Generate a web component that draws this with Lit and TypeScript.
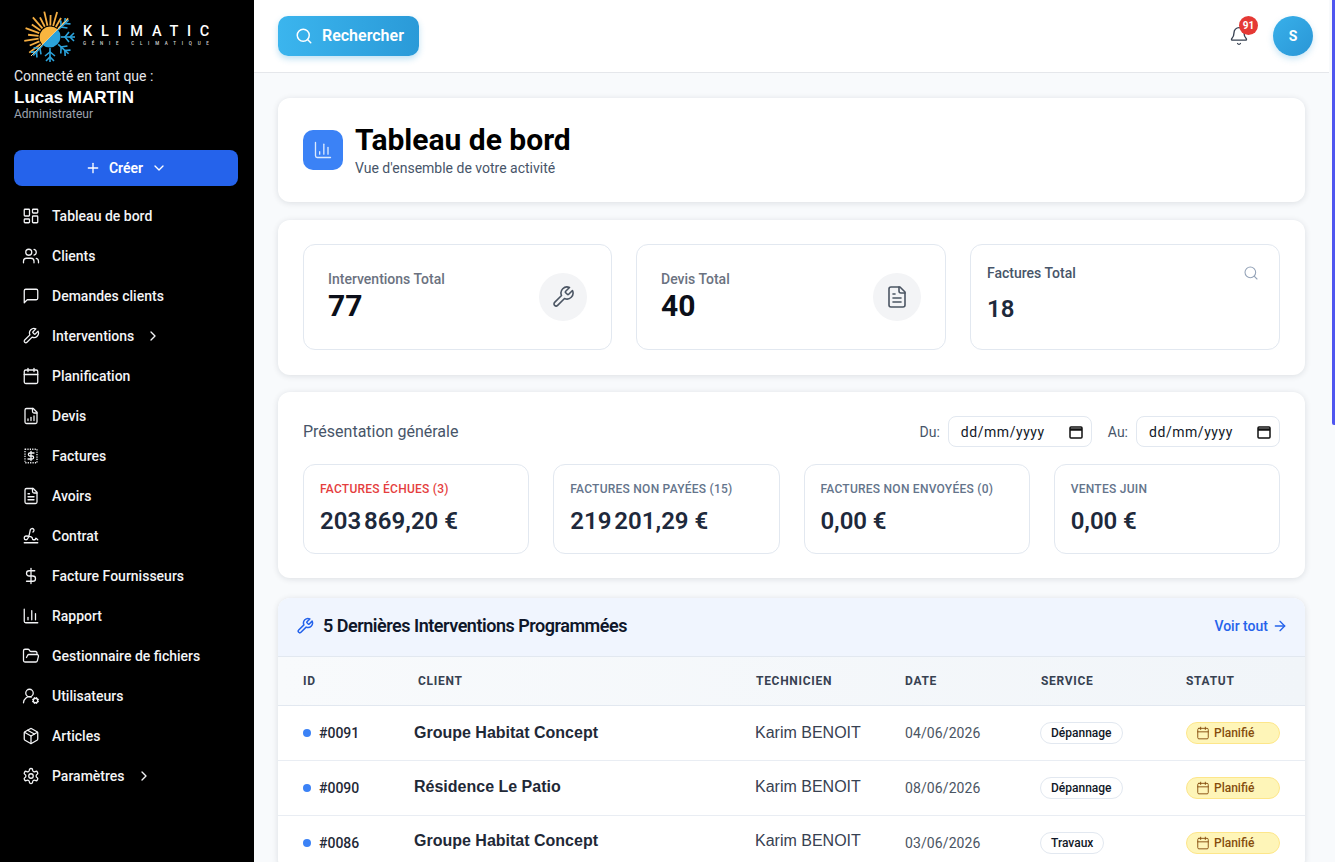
import { LitElement, html, css, svg } from 'lit';
import { customElement } from 'lit/decorators.js';

const paths: Record<string, string[]> = {
  users: ['M16 21v-2a4 4 0 0 0-4-4H6a4 4 0 0 0-4 4v2', 'M9 3a4 4 0 1 0 0 8 4 4 0 0 0 0-8z', 'M22 21v-2a4 4 0 0 0-3-3.87', 'M16 3.13a4 4 0 0 1 0 7.75'],
  message: ['M21 15a2 2 0 0 1-2 2H7l-4 4V5a2 2 0 0 1 2-2h14a2 2 0 0 1 2 2z'],
  wrench: ['M14.7 6.3a1 1 0 0 0 0 1.4l1.6 1.6a1 1 0 0 0 1.4 0l3.77-3.77a6 6 0 0 1-7.94 7.94l-6.91 6.91a2.12 2.12 0 0 1-3-3l6.91-6.91a6 6 0 0 1 7.94-7.94l-3.76 3.76z'],
  calendar: ['M5 4h14a2 2 0 0 1 2 2v14a2 2 0 0 1-2 2H5a2 2 0 0 1-2-2V6a2 2 0 0 1 2-2z', 'M16 2v4', 'M8 2v4', 'M3 10h18'],
  fileChart: ['M15 2H6a2 2 0 0 0-2 2v16a2 2 0 0 0 2 2h12a2 2 0 0 0 2-2V7z', 'M14 2v4a2 2 0 0 0 2 2h4', 'M8 18v-2', 'M12 18v-4', 'M16 18v-6'],
  fileText: ['M15 2H6a2 2 0 0 0-2 2v16a2 2 0 0 0 2 2h12a2 2 0 0 0 2-2V7z', 'M14 2v4a2 2 0 0 0 2 2h4', 'M10 9H8', 'M16 13H8', 'M16 17H8'],
  signature: ['m21 17-2.156-1.868A.5.5 0 0 0 18 15.5v.5a1 1 0 0 1-1 1h-2a1 1 0 0 1-1-1c0-2.545-3.991-3.97-8.5-4a1 1 0 0 0 0 5c4.153 0 4.745-11.295 5.708-13.5a2.5 2.5 0 1 1 3.31 3.284', 'M3 21h18'],
  dollar: ['M12 2v20', 'M17 5H9.5a3.5 3.5 0 0 0 0 7h5a3.5 3.5 0 0 1 0 7H6'],
  chart: ['M3 3v16a2 2 0 0 0 2 2h16', 'M18 17V9', 'M13 17V5', 'M8 17v-3'],
  folder: ['m6 14 1.5-2.9A2 2 0 0 1 9.24 10H20a2 2 0 0 1 1.94 2.5l-1.54 6a2 2 0 0 1-1.95 1.5H4a2 2 0 0 1-2-2V5a2 2 0 0 1 2-2h3.9a2 2 0 0 1 1.69.9l.81 1.2a2 2 0 0 0 1.67.9H18a2 2 0 0 1 2 2v2'],
  userCog: ['M2 21a8 8 0 0 1 10.434-7.62', 'M10 3a5 5 0 1 0 0 10 5 5 0 0 0 0-10z', 'M18 15a3 3 0 1 0 0 6 3 3 0 0 0 0-6z', 'm14.305 19.53.923-.382', 'm15.228 16.852-.923-.383', 'm16.852 15.228-.383-.923', 'm16.852 20.772-.383.924', 'm19.148 15.228.383-.923', 'm19.53 21.696-.382-.924', 'm20.772 16.852.924-.383', 'm20.772 19.148.924.383'],
  box: ['M21 8a2 2 0 0 0-1-1.73l-7-4a2 2 0 0 0-2 0l-7 4A2 2 0 0 0 3 8v8a2 2 0 0 0 1 1.73l7 4a2 2 0 0 0 2 0l7-4A2 2 0 0 0 21 16Z', 'M12 22V12', 'm3.3 7 8.7 5 8.7-5', 'm7.5 4.27 9 5.15'],
  settings: ['M12.22 2h-.44a2 2 0 0 0-2 2v.18a2 2 0 0 1-1 1.73l-.43.25a2 2 0 0 1-2 0l-.15-.08a2 2 0 0 0-2.73.73l-.22.38a2 2 0 0 0 .73 2.73l.15.1a2 2 0 0 1 1 1.72v.51a2 2 0 0 1-1 1.74l-.15.09a2 2 0 0 0-.73 2.73l.22.38a2 2 0 0 0 2.73.73l.15-.08a2 2 0 0 1 2 0l.43.25a2 2 0 0 1 1 1.73V20a2 2 0 0 0 2 2h.44a2 2 0 0 0 2-2v-.18a2 2 0 0 1 1-1.73l.43-.25a2 2 0 0 1 2 0l.15.08a2 2 0 0 0 2.73-.73l.22-.39a2 2 0 0 0-.73-2.73l-.15-.08a2 2 0 0 1-1-1.74v-.5a2 2 0 0 1 1-1.74l.15-.09a2 2 0 0 0 .73-2.73l-.22-.38a2 2 0 0 0-2.73-.73l-.15.08a2 2 0 0 1-2 0l-.43-.25a2 2 0 0 1-1-1.73V4a2 2 0 0 0-2-2z', 'M12 9a3 3 0 1 0 0 6 3 3 0 0 0 0-6z'],
  dashboard: ['M4 3h5a1 1 0 0 1 1 1v7a1 1 0 0 1-1 1H4a1 1 0 0 1-1-1V4a1 1 0 0 1 1-1z', 'M15 3h5a1 1 0 0 1 1 1v3a1 1 0 0 1-1 1h-5a1 1 0 0 1-1-1V4a1 1 0 0 1 1-1z', 'M15 12h5a1 1 0 0 1 1 1v7a1 1 0 0 1-1 1h-5a1 1 0 0 1-1-1v-7a1 1 0 0 1 1-1z', 'M4 16h5a1 1 0 0 1 1 1v3a1 1 0 0 1-1 1H4a1 1 0 0 1-1-1v-3a1 1 0 0 1 1-1z'],
  receipt: ['M16 8h-5.5a2 2 0 0 0 0 4h3a2 2 0 0 1 0 4H8', 'M12 6v12'],
  search: ['M11 3a8 8 0 1 0 0 16 8 8 0 0 0 0-16z', 'm21 21-4.3-4.3'],
  bell: ['M10.268 21a2 2 0 0 0 3.464 0', 'M3.262 15.326A1 1 0 0 0 4 17h16a1 1 0 0 0 .74-1.673C19.41 13.956 18 12.499 18 8A6 6 0 0 0 6 8c0 4.499-1.411 5.956-2.738 7.326'],
  plus: ['M5 12h14', 'M12 5v14'],
  down: ['m6 9 6 6 6-6'],
  right: ['m9 18 6-6-6-6'],
  arrow: ['M5 12h14', 'm12 5 7 7-7 7'],
};

const icon = (name: string, size = 18, width = 2) => html`<svg class="ico" width=${size} height=${size} viewBox="0 0 24 24" fill="none" stroke="currentColor" stroke-width=${width} stroke-linecap="round" stroke-linejoin="round">
  ${paths[name].map((d) => svg`<path d=${d}></path>`)}
  ${name === 'receipt' ? svg`<rect x="4" y="3" width="16" height="18" stroke-dasharray="1.6 1.6" stroke-linecap="butt"></rect>` : ''}
</svg>`;

const navItems = [
  { label: 'Tableau de bord', icon: 'dashboard' },
  { label: 'Clients', icon: 'users' },
  { label: 'Demandes clients', icon: 'message' },
  { label: 'Interventions', icon: 'wrench', more: true },
  { label: 'Planification', icon: 'calendar' },
  { label: 'Devis', icon: 'fileChart' },
  { label: 'Factures', icon: 'receipt' },
  { label: 'Avoirs', icon: 'fileText' },
  { label: 'Contrat', icon: 'signature' },
  { label: 'Facture Fournisseurs', icon: 'dollar' },
  { label: 'Rapport', icon: 'chart' },
  { label: 'Gestionnaire de fichiers', icon: 'folder' },
  { label: 'Utilisateurs', icon: 'userCog' },
  { label: 'Articles', icon: 'box' },
  { label: 'Paramètres', icon: 'settings', more: true },
];

const amounts = [
  { label: 'Factures échues (3)', value: '203\u202f869,20 €', alert: true },
  { label: 'Factures non payées (15)', value: '219\u202f201,29 €' },
  { label: 'Factures non envoyées (0)', value: '0,00 €' },
  { label: 'Ventes juin', value: '0,00 €' },
];

const rows = [
  { id: '#0091', client: 'Groupe Habitat Concept', date: '04/06/2026', service: 'Dépannage' },
  { id: '#0090', client: 'Résidence Le Patio', date: '08/06/2026', service: 'Dépannage' },
  { id: '#0086', client: 'Groupe Habitat Concept', date: '03/06/2026', service: 'Travaux' },
];

// sun rays and snowflake arms of the logo
const rays = Array.from({ length: 13 }, (_, i) => {
  const a = ((-220 + i * (180 / 12.6) + 3) * Math.PI) / 180;
  const long = i % 2 === 0 ? 26 : 22;
  return svg`<line x1=${30 + Math.cos(a) * 11.5} y1=${30 + Math.sin(a) * 11.5} x2=${30 + Math.cos(a) * long} y2=${30 + Math.sin(a) * long} stroke="#f5ae42" stroke-width="1.8"></line>`;
});

const arms = [-42, 0, 42, 90, 132].map((deg) => svg`<g transform="rotate(${deg} 30 30)" stroke="#2ba3dc" stroke-width="1.6" fill="none">
  <path d="M41 30H55"></path>
  <path d="M49 25l-4 5 4 5"></path>
  <path d="M54 26l-4 4 4 4"></path>
</g>`);

@customElement('app-root')
export class AppRoot extends LitElement {
  static styles = css`
    :host {
      display: flex;
      width: 1335px;
      height: 862px;
      overflow: hidden;
      font-family: Roboto, 'Liberation Sans', sans-serif;
      background: #f8fafc;
    }
    .ico {
      display: block;
      flex: none;
    }

    /* sidebar */
    .sidebar {
      width: 254px;
      flex: none;
      background: #000;
      color: #fff;
      box-sizing: border-box;
      padding-top: 10px;
    }
    .logo {
      display: flex;
      align-items: center;
      height: 50px;
      padding-left: 20px;
      gap: 3px;
    }
    .logo-text {
      display: flex;
      flex-direction: column;
    }
    .logo-name {
      font-size: 14.5px;
      font-weight: 500;
      letter-spacing: 8.75px;
      line-height: 16px;
      white-space: nowrap;
    }
    .logo-sub {
      font-size: 4.5px;
      font-weight: 500;
      letter-spacing: 5.75px;
      line-height: 6px;
      margin-top: 1px;
      color: #d8d8d8;
      white-space: nowrap;
    }
    .who {
      padding: 7px 14px 0;
    }
    .who-top {
      font-size: 14px;
      line-height: 18px;
      color: #e5e7eb;
    }
    .who-name {
      font-family: 'Liberation Sans', sans-serif;
      font-size: 17px;
      font-weight: 700;
      line-height: 20px;
      margin-top: 3px;
    }
    .who-role {
      font-size: 12px;
      line-height: 14px;
      margin-top: -1px;
      color: #9ca3af;
    }
    .create {
      height: 36px;
      margin: 29px 16px 10px 14px;
      background: #2563eb;
      border-radius: 8px;
      display: flex;
      align-items: center;
      justify-content: center;
      gap: 8px;
      font-size: 14px;
      font-weight: 600;
    }
    .nav-item {
      display: flex;
      align-items: center;
      height: 40px;
      padding-left: 22px;
      gap: 12px;
      font-size: 14px;
      font-weight: 500;
      color: #f3f4f6;
    }
    .nav-more {
      margin-left: -1px;
    }

    /* main column */
    .main {
      width: 1075px;
      flex: none;
      display: flex;
      flex-direction: column;
    }
    .topbar {
      height: 73px;
      box-sizing: border-box;
      flex: none;
      background: #fff;
      border-bottom: 1px solid #e5e7eb;
      display: flex;
      align-items: center;
      padding: 0 16px 0 24px;
    }
    .search-btn {
      height: 40px;
      width: 141px;
      box-sizing: border-box;
      padding-left: 17px;
      display: flex;
      align-items: center;
      gap: 9px;
      color: #fff;
      font-size: 16px;
      font-weight: 600;
      border-radius: 10px;
      background: linear-gradient(90deg, #3bb5ee, #2a9ad8);
      box-shadow: 0 3px 6px rgba(42, 154, 216, 0.3);
    }
    .search-btn span {
      margin-top: -2px;
    }
    .bell {
      position: relative;
      margin-left: auto;
      margin-right: 24px;
      color: #374151;
    }
    .badge {
      position: absolute;
      top: -10px;
      left: 10px;
      width: 19px;
      height: 19px;
      border-radius: 50%;
      background: #e53935;
      color: #fff;
      font-size: 10px;
      font-weight: 700;
      display: flex;
      align-items: center;
      justify-content: center;
    }
    .avatar {
      width: 40px;
      height: 40px;
      border-radius: 50%;
      background: linear-gradient(135deg, #38b0ea, #2a96d6);
      color: #fff;
      font-size: 14px;
      font-weight: 700;
      display: flex;
      align-items: center;
      justify-content: center;
      box-shadow: 0 3px 6px rgba(42, 154, 216, 0.25);
    }
    .content {
      padding: 25px 24px 0;
      display: flex;
      flex-direction: column;
    }
    .card {
      background: #fff;
      border-radius: 12px;
      box-shadow: 0 1px 6px rgba(15, 23, 42, 0.12);
      box-sizing: border-box;
    }

    /* page title */
    .title-card {
      height: 104px;
      padding: 0 25px;
      display: flex;
      align-items: center;
      gap: 12px;
      margin-bottom: 18px;
    }
    .title-icon {
      width: 40px;
      height: 40px;
      border-radius: 10px;
      background: #3b82f6;
      color: #dbeafe;
      display: flex;
      align-items: center;
      justify-content: center;
    }
    h1 {
      margin: 1px 0 0;
      font-size: 30px;
      font-weight: 700;
      line-height: 34px;
      color: #000;
    }
    .subtitle {
      font-size: 14px;
      line-height: 20px;
      margin-top: 1px;
      color: #475569;
    }

    /* totals */
    .totals {
      height: 155px;
      padding: 24px 25px;
      display: grid;
      grid-template-columns: 309px 310px 310px;
      gap: 24px;
      margin-bottom: 17px;
    }
    .box {
      border: 1px solid #e2e8f0;
      border-radius: 12px;
      box-sizing: border-box;
    }
    .total {
      height: 106px;
      padding: 0 24px;
      display: flex;
      align-items: center;
      justify-content: space-between;
    }
    .total-label {
      font-size: 14px;
      font-weight: 500;
      line-height: 16px;
      color: #6b7280;
    }
    .total-value {
      font-size: 30px;
      font-weight: 700;
      line-height: 36px;
      margin: 1px 0 -1px;
      color: #0b0f19;
    }
    .round {
      width: 48px;
      height: 48px;
      border-radius: 50%;
      background: #f3f4f6;
      color: #4b5563;
      display: flex;
      align-items: center;
      justify-content: center;
    }
    .total-plain {
      height: 106px;
      padding: 20px 16px 0;
    }
    .plain-top {
      display: flex;
      align-items: center;
      justify-content: space-between;
      font-size: 14px;
      font-weight: 500;
      line-height: 16px;
      color: #475569;
    }
    .plain-top .ico {
      color: #94a3b8;
      margin-right: 4px;
    }
    .plain-value {
      font-size: 24px;
      font-weight: 600;
      line-height: 32px;
      margin-top: 12px;
      color: #1e293b;
    }

    /* overview */
    .overview {
      height: 186px;
      padding: 24px 25px;
      margin-bottom: 20px;
    }
    .overview-top {
      display: flex;
      align-items: center;
      height: 31px;
      margin-bottom: 17px;
    }
    .overview-title {
      font-size: 16px;
      color: #475569;
      margin-right: auto;
    }
    .date-label {
      font-size: 14px;
      color: #475569;
      margin: 0 8px 0 16px;
    }
    .date {
      width: 144px;
      height: 31px;
      box-sizing: border-box;
      border: 1px solid #e2e8f0;
      border-radius: 8px;
      display: flex;
      align-items: center;
      justify-content: space-between;
      padding: 0 7px 0 12px;
      font-size: 14px;
      letter-spacing: 0.55px;
      color: #111827;
    }
    .amounts {
      display: grid;
      grid-template-columns: repeat(4, 1fr);
      gap: 24px;
    }
    .amount {
      height: 90px;
      padding: 16px 16px 0;
    }
    .amount-label {
      font-size: 12px;
      font-weight: 500;
      line-height: 16px;
      letter-spacing: 0.25px;
      text-transform: uppercase;
      color: #64748b;
      white-space: nowrap;
    }
    .amount-label.alert {
      color: #e53e3e;
    }
    .amount-value {
      font-size: 24px;
      font-weight: 600;
      line-height: 32px;
      letter-spacing: -0.1px;
      margin-top: 8px;
      color: #1e293b;
    }

    /* table */
    .table-card {
      overflow: hidden;
    }
    .table-head {
      height: 59px;
      box-sizing: border-box;
      border-bottom: 1px solid #e2e8f0;
      background: #f0f5fe;
      display: flex;
      align-items: center;
      padding: 0 17px 2px 18px;
      color: #2563eb;
    }
    .table-title {
      font-size: 18px;
      font-weight: 600;
      line-height: 22px;
      letter-spacing: -0.48px;
      color: #0f172a;
      margin: 0 auto 0 9px;
    }
    .see-all {
      display: flex;
      align-items: center;
      gap: 4px;
      font-size: 14px;
      font-weight: 500;
    }
    .grid {
      display: grid;
      grid-template-columns: 115px 338px 149px 136px 145px 1fr;
      padding-left: 25px;
      align-items: center;
    }
    .grid-head {
      height: 49px;
      box-sizing: border-box;
      border-bottom: 1px solid #e2e8f0;
      background: linear-gradient(90deg, #f8fafc, #f1f5f9);
      font-size: 12px;
      font-weight: 700;
      letter-spacing: 0.7px;
      color: #374151;
    }
    .row {
      height: 55px;
      box-sizing: border-box;
      border-bottom: 1px solid #e9edf3;
    }
    .id {
      display: flex;
      align-items: center;
      gap: 8px;
      font-size: 14px;
      font-weight: 500;
      color: #1f2937;
    }
    .dot {
      width: 8px;
      height: 8px;
      border-radius: 50%;
      background: #3b82f6;
    }
    .client {
      font-family: 'Liberation Sans', sans-serif;
      font-size: 16px;
      font-weight: 700;
      color: #1f2937;
      margin-left: -4px;
    }
    .tech {
      font-family: 'Liberation Sans', sans-serif;
      font-size: 16px;
      color: #374151;
      margin-left: -1px;
    }
    .when {
      font-size: 14px;
      letter-spacing: 0.1px;
      color: #4b5563;
    }
    .service {
      justify-self: start;
      height: 22px;
      box-sizing: border-box;
      margin-left: -1px;
      padding: 0 10px;
      border: 1px solid #e2e8f0;
      border-radius: 11px;
      font-size: 12px;
      font-weight: 500;
      color: #111827;
      display: flex;
      align-items: center;
    }
    .status {
      justify-self: start;
      width: 94px;
      height: 22px;
      box-sizing: border-box;
      padding-left: 9px;
      gap: 4px;
      border: 1px solid #fde68a;
      border-radius: 11px;
      background: #fef5b8;
      font-size: 12px;
      font-weight: 500;
      color: #854d0e;
      display: flex;
      align-items: center;
    }

    /* page scrollbar */
    .scrollbar {
      width: 6px;
      flex: none;
      display: flex;
      justify-content: flex-end;
    }
    .thumb {
      width: 3px;
      height: 425px;
      background: #4f56f0;
      border-bottom-left-radius: 2px;
    }
  `;

  renderLogo() {
    return html`<svg class="ico" width="60" height="60" viewBox="0 0 60 60" fill="none">
      <g transform="translate(0 2)">
        ${rays}${arms}
        <path d="M19.4 40.6A15 15 0 0 1 40.6 19.4z" transform="translate(30 30) scale(.72) translate(-30 -30)" fill="#f9b53f"></path>
        <path d="M40.6 19.4A15 15 0 0 1 19.4 40.6z" transform="translate(30 30) scale(.72) translate(-30 -30)" fill="#2ba3dc"></path>
        <line x1="11" y1="49" x2="48" y2="12" stroke="#e9c98a" stroke-width="1"></line>
      </g>
    </svg>`;
  }

  renderSidebar() {
    return html`<aside class="sidebar">
      <div class="logo">
        ${this.renderLogo()}
        <div class="logo-text">
          <span class="logo-name">KLIMATIC</span>
          <span class="logo-sub">GÉNIE CLIMATIQUE</span>
        </div>
      </div>
      <div class="who">
        <div class="who-top">Connecté en tant que :</div>
        <div class="who-name">Lucas MARTIN</div>
        <div class="who-role">Administrateur</div>
      </div>
      <div class="create">${icon('plus', 16)}<span>Créer</span>${icon('down', 16)}</div>
      <nav>
        ${navItems.map((item) => html`<div class="nav-item">
          ${icon(item.icon, 18, 1.7)}<span>${item.label}</span>${item.more ? html`<span class="nav-more">${icon('right', 16)}</span>` : ''}
        </div>`)}
      </nav>
    </aside>`;
  }

  renderTable() {
    return html`<section class="card table-card">
      <div class="table-head">
        ${icon('wrench', 18)}
        <span class="table-title">5 Dernières Interventions Programmées</span>
        <span class="see-all">Voir tout ${icon('arrow', 16)}</span>
      </div>
      <div class="grid grid-head">
        <span>ID</span><span>CLIENT</span><span>TECHNICIEN</span><span>DATE</span><span>SERVICE</span><span>STATUT</span>
      </div>
      ${rows.map((row, i) => {
        // client and technician sit a little higher on each row
        const lift = `margin-top:${-1 - i * 2}px`;
        return html`<div class="grid row">
          <span class="id"><span class="dot"></span>${row.id}</span>
          <span class="client" style=${lift}>${row.client}</span>
          <span class="tech" style=${lift}>Karim BENOIT</span>
          <span class="when">${row.date}</span>
          <span class="service">${row.service}</span>
          <span class="status">${icon('calendar', 14, 1.6)}Planifié</span>
        </div>`;
      })}
    </section>`;
  }

  render() {
    const calendar = html`<svg class="ico" width="16" height="16" viewBox="0 0 16 16" fill="none" stroke="#111" stroke-width="1.5"><rect x="2" y="3" width="12" height="11" rx="1"></rect><path d="M2 5.5h12" stroke-width="2.5"></path></svg>`;
    return html`
      ${this.renderSidebar()}
      <div class="main">
        <header class="topbar">
          <div class="search-btn">${icon('search', 18)}<span>Rechercher</span></div>
          <div class="bell">${icon('bell', 20, 1.6)}<span class="badge">91</span></div>
          <div class="avatar">S</div>
        </header>
        <div class="content">
          <section class="card title-card">
            <div class="title-icon">${icon('chart', 20, 1.6)}</div>
            <div>
              <h1>Tableau de bord</h1>
              <div class="subtitle">Vue d'ensemble de votre activité</div>
            </div>
          </section>
          <section class="card totals">
            <div class="box total">
              <div><div class="total-label">Interventions Total</div><div class="total-value">77</div></div>
              <div class="round">${icon('wrench', 24, 1.6)}</div>
            </div>
            <div class="box total">
              <div><div class="total-label">Devis Total</div><div class="total-value">40</div></div>
              <div class="round">${icon('fileText', 24, 1.6)}</div>
            </div>
            <div class="box total-plain">
              <div class="plain-top"><span>Factures Total</span>${icon('search', 16, 1.6)}</div>
              <div class="plain-value">18</div>
            </div>
          </section>
          <section class="card overview">
            <div class="overview-top">
              <span class="overview-title">Présentation générale</span>
              <span class="date-label">Du:</span>
              <div class="date">dd/mm/yyyy ${calendar}</div>
              <span class="date-label">Au:</span>
              <div class="date">dd/mm/yyyy ${calendar}</div>
            </div>
            <div class="amounts">
              ${amounts.map((a) => html`<div class="box amount">
                <div class="amount-label ${a.alert ? 'alert' : ''}">${a.label}</div>
                <div class="amount-value">${a.value}</div>
              </div>`)}
            </div>
          </section>
          ${this.renderTable()}
        </div>
      </div>
      <div class="scrollbar"><div class="thumb"></div></div>
    `;
  }
}
